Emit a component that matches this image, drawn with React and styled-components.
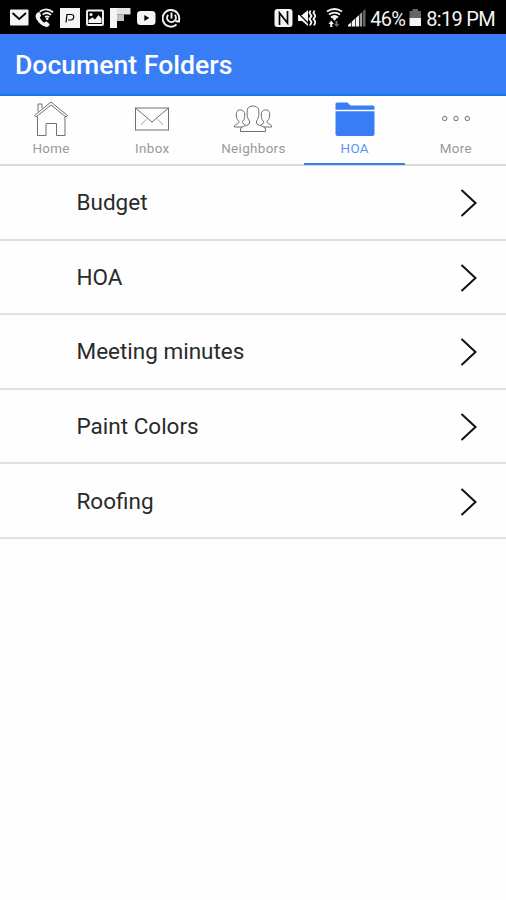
import styled, { createGlobalStyle } from "styled-components";

const folders = ["Budget", "HOA", "Meeting minutes", "Paint Colors", "Roofing"];

const tabs = [
    { label: "Home", icon: <HomeIcon /> },
    { label: "Inbox", icon: <InboxIcon /> },
    { label: "Neighbors", icon: <NeighborsIcon /> },
    { label: "HOA", icon: <FolderIcon />, active: true },
    { label: "More", icon: <MoreIcon /> },
];

export default function App() {
    return (
        <>
            <GlobalStyle />
            <Screen>
                <StatusBar />
                <Header>
                    <h1>Document Folders</h1>
                </Header>
                <TabBar>
                    {tabs.map((tab) => (
                        <Tab key={tab.label} $active={tab.active}>
                            {tab.icon}
                            <span>{tab.label}</span>
                        </Tab>
                    ))}
                </TabBar>
                <FolderList>
                    {folders.map((name) => (
                        <FolderRow key={name}>
                            <span>{name}</span>
                            <Chevron viewBox="0 0 18 30">
                                <path d="M1.5 2 L15.5 15 L1.5 28" />
                            </Chevron>
                        </FolderRow>
                    ))}
                </FolderList>
            </Screen>
        </>
    );
}

function StatusBar() {
    return (
        <StatusDiv>
            <StatusGroup $gap="6px">
                {/* mail */}
                <StatusIcon width="19" height="20" viewBox="0 0 19 20">
                    <rect x="0" y="1.5" width="18.5" height="16" rx="1" />
                    <path className="cut" d="M2.5 5 L9.2 11 L16 5" />
                </StatusIcon>
                {/* wifi call */}
                <StatusIcon width="19" height="20" viewBox="0 0 20 20">
                    <path d="M3 4 C0.5 6 0 8 1.5 11 C4 15.5 7.5 18.5 12 19.5 C14 19.5 15 18 15.5 16.5 L12 13.5 L9.5 15 C7.5 13.5 6 11.5 5 9.5 L6.5 7.5 L5 4 Z" />
                    <path className="line" d="M5 3.5 Q12 -2 19 4 M8 6.5 Q12.5 2.8 17 6.7 M10.5 9 Q12.5 7.5 15 9" />
                    <circle cx="12.8" cy="10.8" r="1.4" />
                </StatusIcon>
                {/* P badge */}
                <StatusIcon width="20" height="20" viewBox="0 0 20 20">
                    <rect width="20" height="20" />
                    <path className="cut thin" d="M6 14.5 L7 6.5 H11 Q14 6.5 13.7 9.2 Q13.4 12 10.5 12 H8" />
                </StatusIcon>
                {/* picture */}
                <StatusIcon width="18" height="20" viewBox="0 0 18 20">
                    <rect className="line" x="1" y="2.5" width="16" height="14.5" rx="1" />
                    <circle cx="5" cy="6.5" r="1.6" />
                    <path d="M2.5 15 V12 L6.5 9.5 L9 11.5 L12.5 7 L15.5 10.5 V15 Z" />
                </StatusIcon>
                {/* flipboard */}
                <StatusIcon width="21" height="20" viewBox="0 0 21 20">
                    <path d="M0 0 H7 V20 H0 Z" />
                    <path d="M7 0 H20.5 V6.5 H7 Z" opacity="0.93" />
                    <path d="M7 6.5 H14 V13 H7 Z" opacity="0.8" />
                </StatusIcon>
                {/* video */}
                <StatusIcon width="19" height="20" viewBox="0 0 19 20">
                    <rect x="0" y="3" width="18.5" height="14" rx="3.5" />
                    <path d="M7.3 7 L12.3 10 L7.3 13 Z" fill="#000" />
                </StatusIcon>
                {/* sync ring */}
                <StatusIcon width="19" height="20" viewBox="0 0 19 20">
                    <path className="line" d="M16.8 13 A8.3 8.3 0 1 0 14.5 16.5 M13.5 13.3 L18 13.5" />
                    <path className="line" d="M6.2 6.8 A4.4 4.4 0 1 0 12.8 6.8 M9.5 4.5 V10.5" />
                </StatusIcon>
            </StatusGroup>
            <StatusGroup $gap="4px">
                {/* nfc */}
                <StatusIcon width="19" height="20" viewBox="0 0 19 20">
                    <rect x="0.5" y="1" width="18" height="18" rx="3" />
                    <path className="cut" d="M5.5 17 V5 L13.5 15 V3" />
                </StatusIcon>
                {/* vibrate */}
                <StatusIcon width="19" height="20" viewBox="0 0 19 20">
                    <path d="M1 7 H5 L11 2 V18 L5 13 H1 Z" />
                    <path className="cut thin" d="M0 4 L13 17" />
                    <path className="line" d="M13.5 2.5 L12.5 5 L14.5 8 L12.5 11 L14.5 14 L13 17.5 M17.5 2.5 L16.5 5 L18.5 8 L16.5 11 L18.5 14 L17 17.5" />
                </StatusIcon>
                {/* wifi */}
                <StatusIcon className="wifi" width="17" height="20" viewBox="0 0 17 20">
                    <path className="line" d="M1 3.5 Q8.5 -1.5 16 3.5 M3 6.5 Q8.5 2.7 14 6.5 M5 9.5 Q8.5 6.5 12 9.5" />
                    <path d="M5.5 9 H11.5 L8.5 13 Z" />
                    <path d="M2.5 16 L5.2 12.5 L8 16 H6.3 V19 H4.2 V16 Z" />
                    <path d="M9.5 13 H11.5 V16 H13.5 L10.8 19 L8 16 H9.5 Z" opacity="0.45" />
                </StatusIcon>
                {/* signal */}
                <StatusIcon width="18" height="20" viewBox="0 0 18 20">
                    <path d="M0 18.5 V17 L3 14.5 V18.5 Z M3.7 18.5 V13.8 L7 10.5 V18.5 Z M7.7 18.5 V10.3 L11 7 V18.5 Z" />
                    <path d="M11.7 18.5 V6.3 L14 4.2 V18.5 Z" opacity="0.65" />
                    <path d="M14.7 18.5 V3.4 L17.5 0.8 V18.5 Z" opacity="0.4" />
                </StatusIcon>
                <StatusText>46%</StatusText>
                {/* battery */}
                <StatusIcon width="13" height="20" viewBox="0 0 13 20">
                    <path d="M3.5 1 H9 V3 H12 V10 H0.5 V3 H3.5 Z" fill="#666" />
                    <rect x="0.5" y="10" width="11.5" height="8" />
                </StatusIcon>
                <StatusText>8:19 PM</StatusText>
            </StatusGroup>
        </StatusDiv>
    );
}

function HomeIcon() {
    return (
        <TabIcon width="34" height="36" viewBox="0 0 34 36">
            <path d="M0.5 14.5 L17 1 L33.5 14.5 L32 16 L17 4 L2 16 Z" />
            <path d="M4 10.5 V3 H8 V7.5 M3.5 15.5 V34.5 H12 V22.5 H22.5 V34.5 H31 V15.5" />
        </TabIcon>
    );
}

function InboxIcon() {
    return (
        <TabIcon width="36" height="36" viewBox="0 0 36 36">
            <rect x="1.5" y="7" width="33" height="22" />
            <path d="M1.5 7 L18 21 L34.5 7" />
            <path d="M7 24 L13 17.5 M29 24 L23 17.5" opacity="0.6" />
        </TabIcon>
    );
}

function NeighborsIcon() {
    return (
        <TabIcon width="40" height="36" viewBox="0 0 40 36">
            <path d="M16.5 22 V20 C13.5 16 14 12 14.5 8 C15.5 4 24 4 25.5 8 C26 12 26.5 16 23.5 20 V22 C24 25 31.5 24.5 32.5 28 V30.5 H7.5 V28 C8.5 24.5 16 25 16.5 22 Z" />
            <path d="M9.5 26 H1.5 V24.5 C3 22.8 6 23 6 20.5 C3.3 18 3 15 3.5 11.5 C4.3 8 10 8 11.5 11.5 C12 15 12 18 9.5 20.5 C9 22.5 10.5 23 12.5 24" />
            <path d="M30.5 26 H38.5 V24.5 C37 22.8 34 23 34 20.5 C36.7 18 37 15 36.5 11.5 C35.7 8 30 8 28.5 11.5 C28 15 28 18 30.5 20.5 C31 22.5 29.5 23 27.5 24" />
        </TabIcon>
    );
}

function FolderIcon() {
    return (
        <TabIcon width="40" height="36" viewBox="0 0 40 36">
            <path className="solid" d="M0.5 8.7 V3 Q0.5 1.5 2 1.5 H12.5 L15.5 4.5 H38 Q39.5 4.5 39.5 6 V8.7 Z" />
            <path className="solid" d="M0.5 10.2 H39.5 V33 Q39.5 35 37.5 35 H2.5 Q0.5 35 0.5 33 Z" />
        </TabIcon>
    );
}

function MoreIcon() {
    return (
        <TabIcon width="32" height="36" viewBox="0 0 32 36">
            <circle cx="4.7" cy="17.5" r="2.2" />
            <circle cx="16" cy="17.5" r="2.2" />
            <circle cx="27.3" cy="17.5" r="2.2" />
        </TabIcon>
    );
}

const GlobalStyle = createGlobalStyle`
    * {
        box-sizing: border-box;
    }

    body {
        margin: 0;
        background-color: #fefefe;
        font-family: Roboto, sans-serif;
    }
`;

const Screen = styled.div`
    width: 506px;
    height: 900px;
    overflow: hidden;
    background-color: #fefefe;
`;

const StatusDiv = styled.div`
    height: 34px;
    padding: 0 11px 0 10px;
    background-color: #000;
    display: flex;
    align-items: center;
    justify-content: space-between;
`;

const StatusGroup = styled.div`
    display: flex;
    align-items: center;
    gap: ${(props) => props.$gap};
    padding-top: 2px;
`;

const StatusIcon = styled.svg`
    flex: none;
    fill: #f4f4f4;

    &.wifi{
        margin-left: 6px;
        margin-right: 1px;
    }

    .line{
        fill: none;
        stroke: #f4f4f4;
        stroke-width: 1.9;
    }

    .cut{
        fill: none;
        stroke: #000;
        stroke-width: 1.7;
    }

    .thin{
        stroke-width: 1.2;
    }
`;

const StatusText = styled.span`
    padding-top: 1px;
    color: #f4f4f4;
    font-size: 20px;
    line-height: 24px;
    letter-spacing: -0.7px;
    white-space: nowrap;
`;

const Header = styled.header`
    height: 62px;
    padding: 1px 15px 0;
    background-color: #397df6;
    border-bottom: 2px solid #1975ec;
    display: flex;
    align-items: center;

    h1{
        margin: 0;
        color: #fff;
        font-size: 26.6px;
        font-weight: 500;
        line-height: 30px;
    }
`;

const TabBar = styled.nav`
    height: 70px;
    display: grid;
    grid-template-columns: repeat(5, 1fr);
    border-bottom: 2px solid #dadada;
`;

const Tab = styled.div`
    height: 69px;
    padding: 5px 0 0 1px;
    display: flex;
    flex-direction: column;
    align-items: center;
    color: ${(props) => (props.$active ? "#5b92f5" : "#999")};
    border-bottom: 2px solid ${(props) => (props.$active ? "#397df6" : "transparent")};

    span{
        margin-top: 4px;
        font-size: 13.4px;
        line-height: 16px;
        letter-spacing: 0.35px;
    }
`;

const TabIcon = styled.svg`
    fill: none;
    stroke: #707070;
    stroke-width: 1;

    .solid{
        fill: #397df6;
        stroke: none;
    }
`;

const FolderList = styled.div`
    display: flex;
    flex-direction: column;
`;

const FolderRow = styled.div`
    height: 74.6px;
    padding: 2px 28px 0 76.5px;
    display: flex;
    align-items: center;
    justify-content: space-between;
    border-bottom: 2px solid #e2e2e2;
    color: #2a2a2a;
    font-size: 22.5px;
    line-height: 28px;

    span{
        padding-bottom: 2px;
    }
`;

const Chevron = styled.svg`
    width: 18px;
    height: 30px;
    fill: none;
    stroke: #111;
    stroke-width: 2;
`;
